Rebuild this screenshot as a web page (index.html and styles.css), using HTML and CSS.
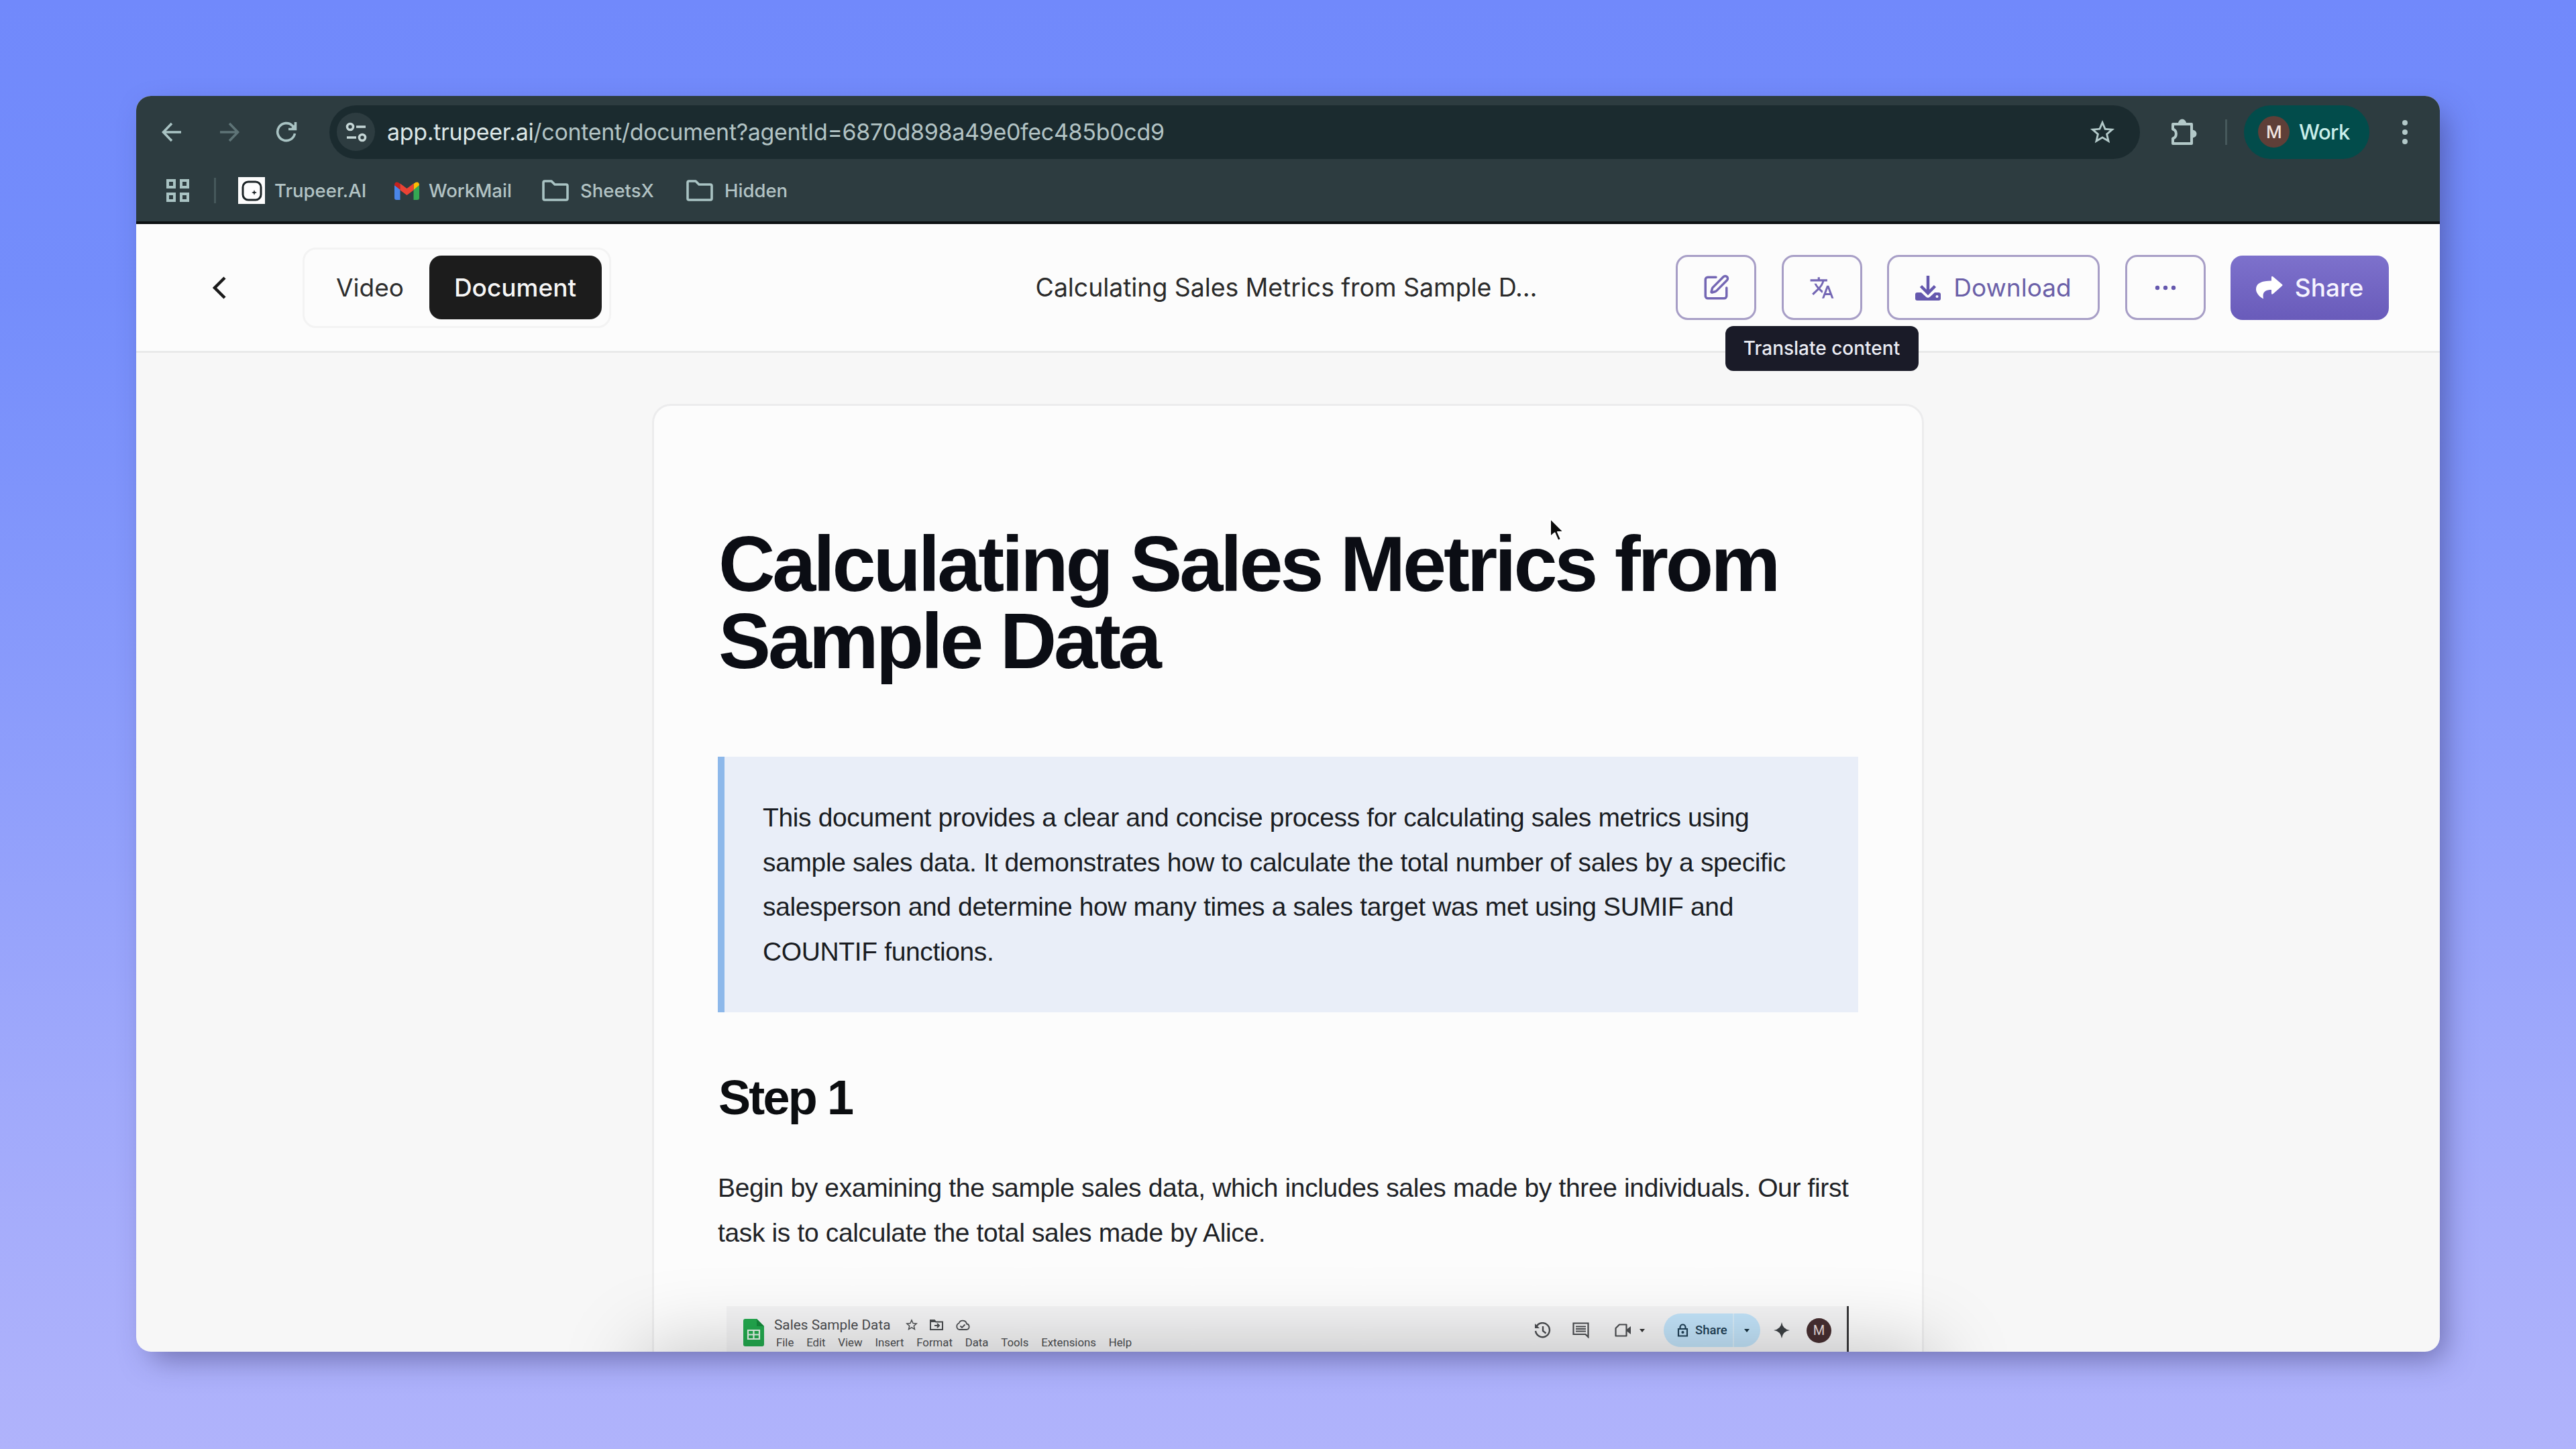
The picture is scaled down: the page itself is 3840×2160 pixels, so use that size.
FILE: index.html
```html
<!DOCTYPE html>
<html lang="en">
<head>
    <meta charset="UTF-8">
    <meta name="viewport" content="width=device-width, initial-scale=1.0">
    <title>Trupeer.AI</title>
    <link rel="stylesheet" href="styles.css">
</head>
<body>
    <div class="window">
        <!-- Browser chrome -->
        <div class="chrome">
            <div class="toolbar">
                <svg class="nav-back" width="30" height="30" viewBox="0 0 30 30" fill="none" stroke="#a9c3c3" stroke-width="3.6"><path d="M29 15H3M15 2L2.5 15L15 28"/></svg>
                <svg class="nav-forward" width="30" height="30" viewBox="0 0 30 30" fill="none" stroke="#5e7376" stroke-width="3.6"><path d="M1 15h26M15 2l12.5 13L15 28"/></svg>
                <svg class="nav-reload" width="32" height="32" viewBox="0 0 32 32" fill="none" stroke="#a9c3c3" stroke-width="3.6"><path d="M28.5 18A13 13 0 1 1 25 6.500L28 10"/><path d="M29.500 1v10.500H19"/><path d="M29 4v8h-8z" fill="#a9c3c3" stroke="none"/></svg>
                <div class="address">
                    <span class="site-info">
                        <svg width="32" height="30" viewBox="0 0 32 30" fill="none" stroke="#c5d6d6" stroke-width="3.6"><circle cx="7" cy="7" r="4.5"/><path d="M16 7h14M2 23h14"/><circle cx="25" cy="23" r="4.5"/></svg>
                    </span>
                    <span class="url"><b>app.trupeer.ai</b>/content/document?agentId=6870d898a49e0fec485b0cd9</span>
                    <svg class="star" width="38" height="38" viewBox="1.5 1.5 21 21" fill="#b3c9c9"><path d="M22 9.240l-7.190-.62L12 2 9.190 8.630 2 9.240l5.460 4.730L5.820 21 12 17.270 18.180 21l-1.630-7.030L22 9.240zM12 15.400l-3.760 2.270 1-4.280-3.320-2.880 4.380-.38L12 6.100l1.710 4.040 4.380.38-3.320 2.880 1 4.280L12 15.400z"/></svg>
                </div>
                <svg class="puzzle" width="42" height="42" viewBox="0 0 42 42"><path d="M5 9H33V38H5V30.500C11.500 28.500 11.500 18.500 5 16.500Z" fill="none" stroke="#b3c9c9" stroke-width="4" stroke-linejoin="round"/><path d="M13 8a6 6.500 0 0 1 12 0zM34 17.500a6.500 6 0 0 1 0 12z" fill="#b3c9c9"/></svg>
                <span class="divider"></span>
                <div class="profile"><span class="avatar">M</span>Work</div>
                <svg class="kebab" width="10" height="38" viewBox="0 0 10 38" fill="#b3c9c9"><circle cx="5" cy="5" r="4"/><circle cx="5" cy="19" r="4"/><circle cx="5" cy="33" r="4"/></svg>
            </div>
            <div class="bookmarks">
                <svg width="36" height="36" viewBox="0 0 36 36" fill="none" stroke="#a9c3c3" stroke-width="4"><path d="M3 3h10v10H3zM23 3h10v10H23zM3 23h10v10H3zM23 23h10v10H23z"/></svg>
                <span class="divider"></span>
                <span class="bookmark trupeer">
                    <svg width="40" height="40" viewBox="0 0 40 40"><path fill="#fdfdfd" d="M0 0h40v40H0z"/><rect x="7" y="7" width="27" height="27" rx="8" fill="none" stroke="#1c2426" stroke-width="3"/><path fill="#1c2426" d="M24 19l1 2.800L28 23l-3 1.200L24 27l-1-2.800L20 23l3-1.200z"/></svg>
                    Trupeer.AI
                </span>
                <span class="bookmark workmail">
                    <svg width="37" height="28" viewBox="0 0 37 28"><path fill="#4a86e8" d="M0 6l8.500 6v16H3q-3 0-3-3z"/><path fill="#34a853" d="M37 6l-8.500 6v16H34q3 0 3-3z"/><path fill="#fbbc04" d="M28.500 4C33 0 37 1 37 6l-8.500 7z"/><path fill="#c5221f" d="M8.500 4C4 0 0 1 0 6l8.500 7z"/><path fill="#ea4335" d="M8.500 3.500L18.500 11l10-7.500v10L18.500 21l-10-7.500z"/></svg>
                    WorkMail
                </span>
                <span class="bookmark sheetsx">
                    <svg width="40" height="32" viewBox="0 0 40 32" fill="none" stroke="#a9c3c3" stroke-width="3.6" stroke-linejoin="round"><path d="M2 4q0-2 2-2h10l5 5h17q2 0 2 2v19q0 2-2 2H4q-2 0-2-2z"/></svg>
                    SheetsX
                </span>
                <span class="bookmark">
                    <svg width="40" height="32" viewBox="0 0 40 32" fill="none" stroke="#a9c3c3" stroke-width="3.6" stroke-linejoin="round"><path d="M2 4q0-2 2-2h10l5 5h17q2 0 2 2v19q0 2-2 2H4q-2 0-2-2z"/></svg>
                    Hidden
                </span>
            </div>
        </div>

        <!-- App header -->
        <header class="header">
            <div class="header-left">
                <svg width="22" height="34" viewBox="0 0 22 34" fill="none" stroke="#1a1a1a" stroke-width="4.5"><path d="M19 2L4 17l15 15"/></svg>
                <div class="tabs">
                    <button class="tab">Video</button>
                    <button class="tab active">Document</button>
                </div>
            </div>
            <div class="doc-name">Calculating Sales Metrics from Sample D…</div>
            <div class="actions">
                <button class="btn btn-icon">
                    <svg width="42" height="42" viewBox="0 0 24 24" fill="none" stroke="#7467b4" stroke-width="2" stroke-linecap="round" stroke-linejoin="round"><path d="M12 3H5a2 2 0 0 0-2 2v14a2 2 0 0 0 2 2h14a2 2 0 0 0 2-2v-7"/><path d="M18.375 2.625a1 1 0 0 1 3 3l-9.013 9.014a2 2 0 0 1-.853.505l-2.873.84a.5.5 0 0 1-.62-.62l.84-2.873a2 2 0 0 1 .506-.852z"/></svg>
                </button>
                <button class="btn btn-icon has-tip">
                    <svg width="38" height="38" viewBox="0 0 24 24" fill="#7467b4"><path d="M12.870 15.070l-2.540-2.510.03-.03c1.740-1.940 2.980-4.170 3.710-6.530H17V4h-7V2H8v2H1v1.990h11.170C11.500 7.920 10.440 9.750 9 11.350 8.070 10.320 7.300 9.190 6.690 8h-2c.73 1.630 1.730 3.170 2.980 4.560l-5.090 5.020L4 19l5-5 3.110 3.110.76-2.040zM18.500 10h-2L12 22h2l1.120-3h4.750L21 22h2l-4.500-12zm-2.620 7l1.620-4.330L19.120 17h-3.240z"/></svg>
                    <span class="tooltip">Translate content</span>
                </button>
                <button class="btn btn-download">
                    <svg width="38" height="38" viewBox="0 0 38 38"><path fill="#6558ae" d="M3 26h6l7 6.500q3 2.500 6 0L29 26h6q3 0 3 3v6q0 3-3 3H3q-3 0-3-3v-6q0-3 3-3z"/><circle cx="32.500" cy="32" r="2" fill="#fcfcfc"/><path d="M19 1v26M8.500 16.500L19 27l10.500-10.500" fill="none" stroke="#6558ae" stroke-width="4.5"/></svg>
                    Download
                </button>
                <button class="btn btn-icon">
                    <svg width="32" height="8" viewBox="0 0 32 8" fill="#6558ae"><circle cx="4" cy="4" r="3.2"/><circle cx="16" cy="4" r="3.2"/><circle cx="28" cy="4" r="3.2"/></svg>
                </button>
                <button class="btn btn-share">
                    <svg width="40" height="35" viewBox="0 0 40 35" fill="#fff"><path d="M23 2.500Q23-.5 25.500 1.500L39 13Q40 14 39 15L25.500 27Q23 29 23 26V21C14 21 9 24 11 34.500 4 31 0 25 0 20 0 11 9 7.500 23 7.500Z"/></svg>
                    Share
                </button>
            </div>
        </header>

        <!-- Document -->
        <main class="content">
            <article class="page">
                <h1>Calculating Sales Metrics from<br>Sample Data</h1>
                <blockquote>This document provides a clear and concise process for calculating sales metrics using<br>sample sales data. It demonstrates how to calculate the total number of sales by a specific<br>salesperson and determine how many times a sales target was met using SUMIF and<br>COUNTIF functions.</blockquote>
                <h2>Step 1</h2>
                <p>Begin by examining the sample sales data, which includes sales made by three individuals. Our first<br>task is to calculate the total sales made by Alice.</p>

                <div class="sheet">
                    <svg class="sheet-logo" width="31" height="41" viewBox="0 0 31 41"><path fill="#23a94e" d="M3 0h17l11 11v27q0 3-3 3H3q-3 0-3-3V3q0-3 3-3z"/><path fill="#158a3b" d="M20 0l11 11H20z"/><path fill="none" stroke="#e4f3e8" stroke-width="2.2" d="M7 17h17v13H7zM15.500 17v13M7 23.500h17"/></svg>
                    <div class="sheet-info">
                        <div class="sheet-title">
                            <span>Sales Sample Data</span>
                            <svg width="18" height="18" viewBox="2 2 20 20" fill="#4b4d50"><path d="M22 9.240l-7.190-.62L12 2 9.190 8.630 2 9.240l5.460 4.730L5.820 21 12 17.270 18.180 21l-1.630-7.030L22 9.240zM12 15.400l-3.760 2.270 1-4.280-3.320-2.880 4.380-.38L12 6.100l1.710 4.040 4.380.38-3.320 2.880 1 4.280L12 15.400z"/></svg>
                            <svg width="20" height="16" viewBox="0 0 20 16" fill="none" stroke="#4b4d50" stroke-width="2"><path d="M1 1h6l2 2.500h10V15H1zM1 3h7M7 9h7M11 6l3 3-3 3"/></svg>
                            <svg width="22" height="16" viewBox="0 0 22 16" fill="none" stroke="#4b4d50" stroke-width="1.8"><path d="M6 15a5 5 0 0 1-.5-9.500 6 6 0 0 1 11.500 1A4.300 4.300 0 0 1 17 15zM7.500 9.500L10 12l4.500-4.500"/></svg>
                        </div>
                        <div class="sheet-menu">
                            <span>File</span><span>Edit</span><span>View</span><span>Insert</span><span>Format</span><span>Data</span><span>Tools</span><span>Extensions</span><span>Help</span>
                        </div>
                    </div>
                    <div class="sheet-tools">
                        <svg class="history" width="25" height="24" viewBox="0 0 25 24" fill="none" stroke="#4b4d50" stroke-width="2.4"><path d="M3 7a10.500 10.500 0 1 1-1 6M13 6v7l4.500 3.500"/><path d="M1 2v7h7" fill="#4b4d50" stroke="none"/></svg>
                        <svg class="comment" width="25" height="24" viewBox="0 0 25 24"><path fill="none" stroke="#4b4d50" stroke-width="2.2" d="M1.500 1.500h22V22l-4-4h-18z"/><path stroke="#4b4d50" stroke-width="2" d="M5 6.500h15M5 10h15M5 13.500h15"/></svg>
                        <svg class="camera" width="25" height="20" viewBox="0 0 25 20"><path fill="none" stroke="#4b4d50" stroke-width="2.2" stroke-linejoin="round" d="M7 1.500h10.500v17h-16V7z"/><path fill="#4b4d50" d="M17.500 9L24 4v12l-6.500-5z"/></svg>
                        <svg class="caret" width="8" height="5" viewBox="0 0 8 5"><path fill="#333" d="M0 0h8L4 5z"/></svg>
                        <div class="sheet-share">
                            <svg width="17" height="20" viewBox="0 0 17 20" fill="none" stroke="#1f3f55" stroke-width="2.2"><path d="M2 8h13v10.500H2zM4.500 8V5.500a4 4 0 0 1 8 0V8"/><circle cx="8.500" cy="13" r="1"/></svg>
                            <span>Share</span>
                            <i></i>
                            <svg width="8" height="5" viewBox="0 0 8 5"><path fill="#16303f" d="M0 0h8L4 5z"/></svg>
                        </div>
                        <svg class="spark" width="24" height="24" viewBox="0 0 24 24" fill="#3c4043"><path d="M12 0Q13.500 10.500 24 12 13.500 13.500 12 24 10.500 13.500 0 12 10.500 10.500 12 0z"/></svg>
                        <span class="sheet-avatar">M</span>
                    </div>
                </div>
            </article>
        </main>
        <div class="bottom-shade"></div>
    </div>

    <svg class="cursor" width="30" height="40" viewBox="0 0 30 40"><path fill="#0b0b0b" stroke="#fff" stroke-width="2" stroke-linejoin="round" d="M3 2v27l6.500-5.500 5 11.500 4.500-2-5-11h9z"/></svg>
</body>
</html>
```
FILE: styles.css
```css
* {
    box-sizing: border-box;
}

body {
    margin: 0;
    height: 2160px;
    overflow: hidden;
    font-family: Inter, sans-serif;
    background: linear-gradient(180deg, #7189fb 0%, #748dfb 20%, #a0a9fb 75%, #b0b3fb 100%);
    padding: 143px 203px 145px;
}

button {
    font-family: inherit;
    margin: 0;
}

svg {
    display: block;
    flex: none;
}

.window {
    position: relative;
    width: 3434px;
    height: 1872px;
    border-radius: 22px;
    overflow: hidden;
    background: #f7f7f7;
    box-shadow: 14px 18px 44px -8px rgba(50, 45, 100, 0.5);
}

/* Browser chrome */
.chrome {
    height: 191px;
    background: #2d3c40;
    border-bottom: 4px solid #0d1113;
}

.toolbar {
    display: flex;
    align-items: center;
    height: 107px;
    padding-left: 38px;
}

.nav-forward {
    margin-left: 56px;
}

.nav-reload {
    margin: 0 48px 0 54px;
}

.address {
    display: flex;
    align-items: center;
    width: 2699px;
    height: 80px;
    padding: 0 37px 0 11px;
    border-radius: 40px;
    background: #1b2b2f;
}

.site-info {
    display: flex;
    align-items: center;
    justify-content: center;
    width: 57px;
    height: 57px;
    margin-right: 18px;
    border-radius: 50%;
    background: #2d3c40;
}

.url {
    flex: 1;
    padding-bottom: 1px;
    font-size: 34px;
    letter-spacing: -0.32px;
    color: #b2c3c4;
}

.url b {
    font-weight: 400;
    color: #dbe6e6;
}

.puzzle {
    margin-left: 44px;
}

.divider {
    width: 3px;
    height: 38px;
    background: #46585b;
}

.toolbar .divider {
    margin: 0 25px 0 41px;
}

.profile {
    display: flex;
    align-items: center;
    gap: 14px;
    width: 187px;
    height: 80px;
    padding-left: 21px;
    border-radius: 40px;
    background: #024c4b;
    color: #c9eeea;
    font-size: 31px;
    font-weight: 500;
    letter-spacing: -0.6px;
}

.avatar {
    width: 47px;
    height: 47px;
    border-radius: 50%;
    background: #5f3f38;
    color: #f0e4e0;
    font-size: 26px;
    line-height: 47px;
    text-align: center;
}

.kebab {
    margin-left: 48px;
}

.bookmarks {
    display: flex;
    align-items: center;
    height: 68px;
    padding-left: 44px;
    color: #b2c3c4;
    font-size: 27.5px;
    font-weight: 500;
    letter-spacing: 0;
}

.bookmarks .divider {
    margin: 0 33px 0 36px;
}

.bookmark {
    display: flex;
    align-items: center;
    gap: 17px;
}

.trupeer {
    gap: 14px;
    width: 233px;
}

.workmail {
    gap: 14px;
    width: 220px;
}

.sheetsx {
    width: 215px;
}

/* App header */
.header {
    display: grid;
    grid-template-columns: 1fr auto 1fr;
    align-items: center;
    height: 192px;
    padding: 0 76px 0 113px;
    background: #fcfcfc;
    border-bottom: 3px solid #e9eaea;
}

.header-left {
    display: flex;
    align-items: center;
    gap: 113px;
}

.tabs {
    display: flex;
    align-items: center;
    width: 460px;
    height: 120px;
    padding: 0 10px;
    border: 3px solid #f3f3f3;
    border-radius: 20px;
}

.tab {
    height: 95px;
    padding: 0 38px 0 37px;
    border: none;
    border-radius: 18px;
    background: none;
    color: #2e2e2e;
    font-size: 37px;
}

.tab.active {
    background: #1c1c1c;
    color: #f6f6f6;
    font-weight: 500;
}

.doc-name {
    margin-right: 42px;
    color: #2b2b2b;
    font-size: 37.5px;
    letter-spacing: -0.1px;
}

.actions {
    display: flex;
    align-items: center;
    justify-content: flex-end;
    gap: 37.5px;
}

.btn {
    display: flex;
    align-items: center;
    justify-content: center;
    height: 97px;
    padding: 0;
    border: 3px solid #a79ec6;
    border-radius: 18px;
    background: #fcfcfc;
    color: #6b60a8;
    font-size: 37px;
}

.btn-icon {
    width: 120px;
}

.btn-download {
    gap: 19px;
    width: 317px;
}

.btn-share {
    gap: 18px;
    width: 236px;
    height: 96px;
    border: none;
    background: linear-gradient(180deg, #7d71cc, #695bba);
    color: #f6f4ff;
    font-weight: 500;
}

.has-tip {
    position: relative;
}

.tooltip {
    position: absolute;
    top: 103px;
    left: -87px;
    z-index: 2;
    width: 288px;
    height: 67px;
    border-radius: 12px;
    background: #1a1b28;
    color: #e8eaf2;
    font-size: 28px;
    font-weight: 500;
    line-height: 66px;
    text-align: center;
}

/* Document page */
.content {
    padding-top: 76px;
}

.page {
    width: 1896px;
    height: 1600px;
    margin: 0 auto;
    padding: 179px 95px 0;
    border: 3px solid #ececed;
    border-radius: 28px;
    background: #fcfcfc;
    font-family: "Liberation Sans", Arial, sans-serif;
}

h1 {
    margin: 0 0 115px;
    padding-left: 1px;
    color: #0b0d14;
    font-size: 117px;
    line-height: 114.5px;
    letter-spacing: -4.15px;
    white-space: nowrap;
}

blockquote {
    margin: 0;
    padding: 58px 0 56px 57px;
    border-left: 10px solid #8db8ea;
    background: #e9eef8;
    color: #191c22;
    font-size: 39px;
    line-height: 66.7px;
    letter-spacing: -0.37px;
    white-space: nowrap;
}

h2 {
    margin: 84px 0 59px;
    padding-left: 1px;
    color: #0b0d10;
    font-size: 72px;
    line-height: 86px;
    letter-spacing: -2.8px;
}

p {
    margin: 0;
    color: #202226;
    font-size: 39px;
    line-height: 66.7px;
    letter-spacing: -0.36px;
    white-space: nowrap;
}

/* Spreadsheet picture at the end of the step */
.sheet {
    display: flex;
    align-items: flex-start;
    height: 120px;
    margin: 76px 14px 0 13px;
    padding: 0 23px 0 25px;
    border-right: 3px solid #3a3a3c;
    background: #f4f4f5;
    font-family: Roboto, sans-serif;
    color: #4b4d50;
}

.sheet-logo {
    margin: 19px 15px 0 0;
}

.sheet-title {
    display: flex;
    align-items: center;
    gap: 18px;
    height: 24px;
    margin-top: 16px;
    font-size: 20.8px;
}

.sheet-title span {
    margin-right: 4px;
}

.sheet-menu {
    display: flex;
    gap: 18.8px;
    margin: 4px 0 0 3px;
    font-size: 16.8px;
    line-height: 20px;
}

.sheet-tools {
    display: flex;
    align-items: center;
    height: 50px;
    margin: 11px 0 0 auto;
}

.comment {
    margin-left: 32px;
}

.camera {
    margin-left: 38px;
}

.caret {
    margin: 0 28px 0 12px;
}

.sheet-share {
    display: flex;
    align-items: center;
    width: 144px;
    height: 50px;
    padding-left: 20px;
    border-radius: 25px;
    background: #c2e3f9;
    color: #1f3f55;
    font-size: 18.5px;
    font-weight: 500;
}

.sheet-share span {
    width: 58px;
    padding-left: 10px;
}

.sheet-share i {
    width: 2px;
    height: 50px;
    margin: 0 15px 0 8px;
    background: #d6ebf8;
}

.spark {
    margin: 0 25px 0 20px;
}

.sheet-avatar {
    width: 37px;
    height: 37px;
    border-radius: 50%;
    background: #472f31;
    color: #eadfdd;
    font-size: 20px;
    line-height: 37px;
    text-align: center;
}

.bottom-shade {
    position: absolute;
    top: 100%;
    left: 757px;
    width: 1920px;
    height: 120px;
    box-shadow: 0 0 120px rgba(0, 0, 0, 0.26);
}

.cursor {
    position: absolute;
    top: 771px;
    left: 2308px;
}
```
